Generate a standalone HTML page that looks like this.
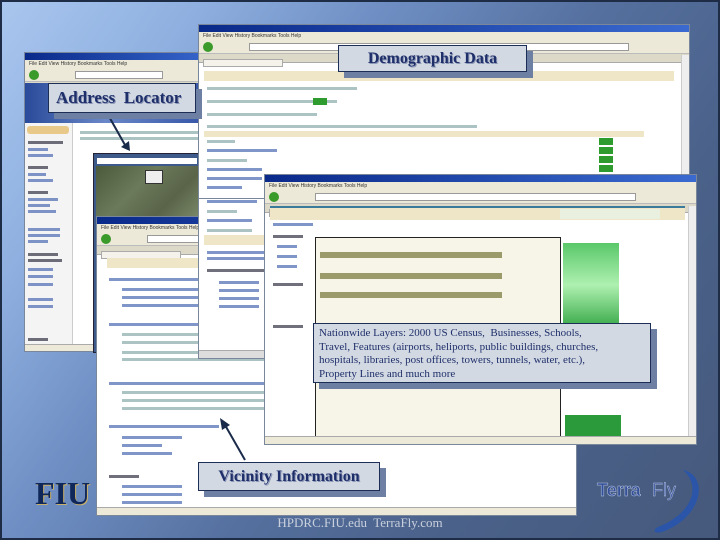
<!DOCTYPE html>
<html><head><meta charset="utf-8"><style>
*{margin:0;padding:0;box-sizing:border-box}
body{width:720px;height:540px;overflow:hidden;position:relative;font-family:"Liberation Sans",sans-serif;
background:linear-gradient(125deg,#a9c6ee 0%,#8fb0e0 18%,#6f8fc4 35%,#55709f 55%,#4a6189 75%,#46597c 100%);}
.frame{position:absolute;inset:0;border:2px solid #1e2c45;pointer-events:none}
.win{position:absolute;background:#fff;border:1px solid #7a8699;overflow:hidden}
.tb{height:7px;background:linear-gradient(90deg,#0a2a8a,#3a6ad0);}
.mb{height:8px;background:#ece9d8;font-size:5px;color:#333;padding-left:4px;line-height:8px;white-space:nowrap}
.nav{height:14px;background:#ece9d8;border-bottom:1px solid #bbb;position:relative}
.nav .url{position:absolute;left:50px;right:60px;top:3px;height:8px;background:#fff;border:1px solid #999}
.nav .g{position:absolute;left:4px;top:2px;width:10px;height:10px;border-radius:50%;background:#3a9a2a}
.tabs{height:9px;background:#dcd9c8;border-bottom:1px solid #aaa}
.tabs i{display:inline-block;margin:1px 0 0 4px;width:70px;height:8px;background:#f4f2ea;border:1px solid #aaa}
.ln{position:absolute;height:3px;background:#8aa;opacity:.7}
.lk{background:#4a6ab0}
.hd{position:absolute;height:10px;background:#efe6c8}
.lbl{position:absolute;background:#d3d9e3;border:1px solid #1c2e55;color:#1e2f6a;font-family:"Liberation Serif",serif;font-weight:bold;box-shadow:6px 6px 0 #6d7fa3;text-shadow:1px 1px 0 #8b95b5;white-space:nowrap;overflow:hidden}
.st{position:absolute;left:0;right:0;bottom:0;height:7px;background:#ece9d8;border-top:1px solid #aaa}
.go{position:absolute;width:14px;height:7px;background:#2e9b2e}
</style></head><body>

<div class="win" style="left:24px;top:52px;width:200px;height:300px">
<div class="tb"></div><div class="mb">File Edit View History Bookmarks Tools Help</div>
<div class="nav"><div class="g"></div><div class="url"></div></div><div class="tabs"><i></i></div>
<div style="position:absolute;left:0;top:30px;width:200px;height:40px;background:linear-gradient(90deg,#2a4a9a,#6a88c8 40%,#2a4aa0)"></div>
<div style="position:absolute;left:0;top:70px;width:48px;height:230px;background:#f4f4f4;border-right:1px solid #ccc"></div>
<div style="position:absolute;left:2px;top:73px;width:42px;height:8px;background:#e8c98a;border-radius:3px"></div>
<div class="ln" style="left:3px;top:88px;width:35px;background:#334"></div>
<div class="ln lk" style="left:3px;top:95px;width:20px"></div><div class="ln lk" style="left:3px;top:101px;width:25px"></div>
<div class="ln" style="left:3px;top:113px;width:20px;background:#334"></div>
<div class="ln lk" style="left:3px;top:120px;width:18px"></div><div class="ln lk" style="left:3px;top:126px;width:25px"></div>
<div class="ln" style="left:3px;top:138px;width:20px;background:#334"></div>
<div class="ln lk" style="left:3px;top:145px;width:30px"></div><div class="ln lk" style="left:3px;top:151px;width:22px"></div><div class="ln lk" style="left:3px;top:157px;width:28px"></div>
<div class="ln lk" style="left:3px;top:175px;width:32px"></div><div class="ln lk" style="left:3px;top:181px;width:32px"></div><div class="ln lk" style="left:3px;top:187px;width:20px"></div>
<div class="ln" style="left:3px;top:200px;width:30px;background:#334"></div><div class="ln" style="left:3px;top:206px;width:34px;background:#334"></div>
<div class="ln lk" style="left:3px;top:215px;width:25px"></div><div class="ln lk" style="left:3px;top:222px;width:25px"></div><div class="ln lk" style="left:3px;top:230px;width:25px"></div>
<div class="ln lk" style="left:3px;top:245px;width:25px"></div><div class="ln lk" style="left:3px;top:252px;width:25px"></div>
<div class="ln" style="left:3px;top:285px;width:20px;background:#334"></div>
<div class="ln" style="left:55px;top:78px;width:140px"></div><div class="ln" style="left:55px;top:84px;width:140px"></div>
<div class="st"></div>
</div>

<div style="position:absolute;left:93px;top:153px;width:110px;height:200px;background:#3d5a8a;border:1px solid #223"></div>
<div style="position:absolute;left:97px;top:158px;width:100px;height:6px;background:#fff"></div>
<div style="position:absolute;left:96px;top:166px;width:104px;height:52px;background:linear-gradient(135deg,#4a5a3a,#6a7a5a 40%,#5a6448 70%,#7a8a6a)"></div>
<div style="position:absolute;left:145px;top:170px;width:18px;height:14px;background:#eee;border:1px solid #333"></div>

<div class="win" style="left:96px;top:216px;width:481px;height:300px">
<div class="tb"></div><div class="mb">File Edit View History Bookmarks Tools Help</div>
<div class="nav"><div class="g"></div><div class="url"></div></div><div class="tabs"><i style="width:80px"></i></div>
<div class="hd" style="left:10px;top:41px;width:460px"></div>
<div class="ln lk" style="left:12px;top:61px;width:120px"></div>
<div class="ln lk" style="left:25px;top:71px;width:100px"></div><div class="ln lk" style="left:25px;top:79px;width:100px"></div><div class="ln lk" style="left:25px;top:87px;width:100px"></div>
<div class="ln lk" style="left:12px;top:106px;width:150px"></div>
<div class="ln" style="left:25px;top:116px;width:200px"></div><div class="ln" style="left:25px;top:124px;width:200px"></div>
<div class="ln" style="left:25px;top:134px;width:200px"></div><div class="ln" style="left:25px;top:141px;width:200px"></div>
<div class="ln lk" style="left:12px;top:165px;width:180px"></div>
<div class="ln" style="left:25px;top:174px;width:200px"></div><div class="ln" style="left:25px;top:182px;width:200px"></div><div class="ln" style="left:25px;top:190px;width:200px"></div>
<div class="ln lk" style="left:12px;top:208px;width:110px"></div>
<div class="ln lk" style="left:25px;top:219px;width:60px"></div><div class="ln lk" style="left:25px;top:227px;width:40px"></div><div class="ln lk" style="left:25px;top:235px;width:50px"></div>
<div class="ln" style="left:12px;top:258px;width:30px;background:#334"></div>
<div class="ln lk" style="left:25px;top:268px;width:60px"></div><div class="ln lk" style="left:25px;top:276px;width:60px"></div><div class="ln lk" style="left:25px;top:284px;width:60px"></div>
<div class="st" style="height:8px"></div>
</div>

<div class="win" style="left:198px;top:24px;width:492px;height:175px">
<div class="tb"></div><div class="mb">File Edit View History Bookmarks Tools Help</div>
<div class="nav"><div class="g"></div><div class="url"></div></div><div class="tabs"><i style="width:80px"></i></div>
<div class="hd" style="left:5px;top:46px;width:470px"></div>
<div style="position:absolute;right:0;top:30px;width:8px;height:145px;background:#eee;border-left:1px solid #ccc"></div>
<div class="ln" style="left:8px;top:62px;width:150px"></div>
<div class="ln" style="left:8px;top:75px;width:130px"></div><div class="go" style="left:114px;top:73px"></div>
<div class="ln" style="left:8px;top:88px;width:110px"></div>
<div class="ln" style="left:8px;top:100px;width:270px"></div>
<div style="position:absolute;left:5px;top:106px;width:440px;height:6px;background:#efe6c8"></div>
<div class="ln" style="left:8px;top:115px;width:28px"></div><div class="ln lk" style="left:8px;top:124px;width:70px"></div>
<div class="ln" style="left:8px;top:134px;width:40px"></div><div class="ln lk" style="left:8px;top:143px;width:55px"></div>
<div class="ln lk" style="left:8px;top:152px;width:55px"></div><div class="ln lk" style="left:8px;top:161px;width:35px"></div>
<div class="go" style="left:400px;top:113px"></div><div class="go" style="left:400px;top:122px"></div><div class="go" style="left:400px;top:131px"></div><div class="go" style="left:400px;top:140px"></div>
</div>
<div class="win" style="left:198px;top:199px;width:70px;height:160px;border-top:none">
<div class="ln lk" style="left:8px;top:1px;width:50px"></div>
<div class="ln" style="left:8px;top:11px;width:30px"></div><div class="ln lk" style="left:8px;top:20px;width:45px"></div><div class="ln" style="left:8px;top:30px;width:45px"></div>
<div class="hd" style="left:5px;top:36px;width:65px"></div>
<div class="ln lk" style="left:8px;top:52px;width:60px"></div><div class="ln lk" style="left:8px;top:58px;width:60px"></div>
<div class="ln" style="left:8px;top:70px;width:60px;background:#334"></div>
<div class="ln lk" style="left:20px;top:82px;width:40px"></div><div class="ln lk" style="left:20px;top:90px;width:40px"></div><div class="ln lk" style="left:20px;top:98px;width:40px"></div><div class="ln lk" style="left:20px;top:106px;width:40px"></div>
<div class="st" style="top:151px;bottom:auto;height:8px;background:#ddd"></div>
</div>

<div class="win" style="left:264px;top:174px;width:433px;height:271px">
<div class="tb"></div><div class="mb">File Edit View History Bookmarks Tools Help</div>
<div class="nav"><div class="g"></div><div class="url"></div></div><div class="tabs"><i style="width:60px"></i><i style="width:60px"></i></div>
<div style="position:absolute;left:5px;top:31px;width:415px;height:2px;background:#3a7a9a"></div>
<div class="hd" style="left:5px;top:33px;width:415px;height:12px"></div>
<div style="position:absolute;left:50px;top:62px;width:246px;height:205px;background:#f7f5e8;border:1px solid #222"></div>
<div style="position:absolute;left:55px;top:77px;width:182px;height:6px;background:#9a9a6a"></div>
<div style="position:absolute;left:55px;top:98px;width:182px;height:6px;background:#9a9a6a"></div>
<div style="position:absolute;left:55px;top:117px;width:182px;height:6px;background:#9a9a6a"></div>
<div style="position:absolute;left:295px;top:34px;width:100px;height:10px;background:#eaf0e0"></div>
<div style="position:absolute;left:298px;top:68px;width:56px;height:140px;background:linear-gradient(180deg,#5ac86a,#aef0b0 30%,#3aaa4a 60%,#8ae08a)"></div>
<div style="position:absolute;left:300px;top:240px;width:56px;height:22px;background:#2a9a3a"></div>
<div style="position:absolute;right:0;top:31px;width:8px;height:232px;background:#eee;border-left:1px solid #ccc"></div>
<div class="ln lk" style="left:8px;top:48px;width:40px"></div><div class="ln" style="left:8px;top:60px;width:30px;background:#334"></div>
<div class="ln lk" style="left:12px;top:70px;width:20px"></div><div class="ln lk" style="left:12px;top:80px;width:20px"></div><div class="ln lk" style="left:12px;top:90px;width:20px"></div>
<div class="ln" style="left:8px;top:108px;width:30px;background:#334"></div><div class="ln" style="left:8px;top:150px;width:30px;background:#334"></div>
<div class="st" style="height:8px"></div>
</div>

<svg style="position:absolute;left:0;top:0" width="720" height="540">
<line x1="107" y1="113" x2="125" y2="145" stroke="#1a2a4a" stroke-width="2"/>
<polygon points="121,147 130,151 129,141" fill="#1a2a4a"/>
<line x1="245" y1="460" x2="225" y2="425" stroke="#1a2a4a" stroke-width="2"/>
<polygon points="220,418 222,430 230,425" fill="#1a2a4a"/>
</svg>

<div class="lbl" style="left:48px;top:83px;width:148px;height:30px;font-size:17px;line-height:28px;padding-left:7px">Address&nbsp; Locator</div>
<div class="lbl" style="left:338px;top:45px;width:189px;height:27px;font-size:16px;line-height:26px;text-align:center">Demographic Data</div>
<div class="lbl" style="left:313px;top:323px;width:338px;height:60px;font-size:11px;line-height:13.5px;padding:3px 5px;font-weight:normal;text-shadow:none;color:#1e2f6a">Nationwide Layers: 2000 US Census,&nbsp; Businesses, Schools,<br>Travel, Features (airports, heliports, public buildings, churches,<br>hospitals, libraries, post offices, towers, tunnels, water, etc.),<br>Property Lines and much more</div>
<div class="lbl" style="left:198px;top:462px;width:182px;height:29px;font-size:16px;line-height:28px;text-align:center">Vicinity Information</div>

<div style="position:absolute;left:35px;top:475px;font-family:'Liberation Serif',serif;font-weight:bold;font-size:32px;color:#10275a;text-shadow:1px 1px 0 #c8b06a">FIU</div>

<svg style="position:absolute;left:590px;top:460px" width="125" height="80">
<path d="M93,10 C120,16 112,58 72,72 C64,74 62,70 68,67 C102,54 112,26 93,10 Z" fill="#2a55a8"/>
<text x="7" y="36" font-family="Liberation Sans,sans-serif" font-size="18" font-weight="bold" fill="#34509a" stroke="#b8c4dc" stroke-width=".5">Terra</text>
<text x="62" y="36" font-family="Liberation Sans,sans-serif" font-size="18" fill="#4660a8" stroke="#b8c4dc" stroke-width=".4">Fly</text>
</svg>

<div style="position:absolute;left:0;width:720px;text-align:center;top:515px;font-family:'Liberation Serif',serif;font-size:13px;color:#c9d0dd">HPDRC.FIU.edu&nbsp; TerraFly.com</div>
<div class="frame"></div>
</body></html>
